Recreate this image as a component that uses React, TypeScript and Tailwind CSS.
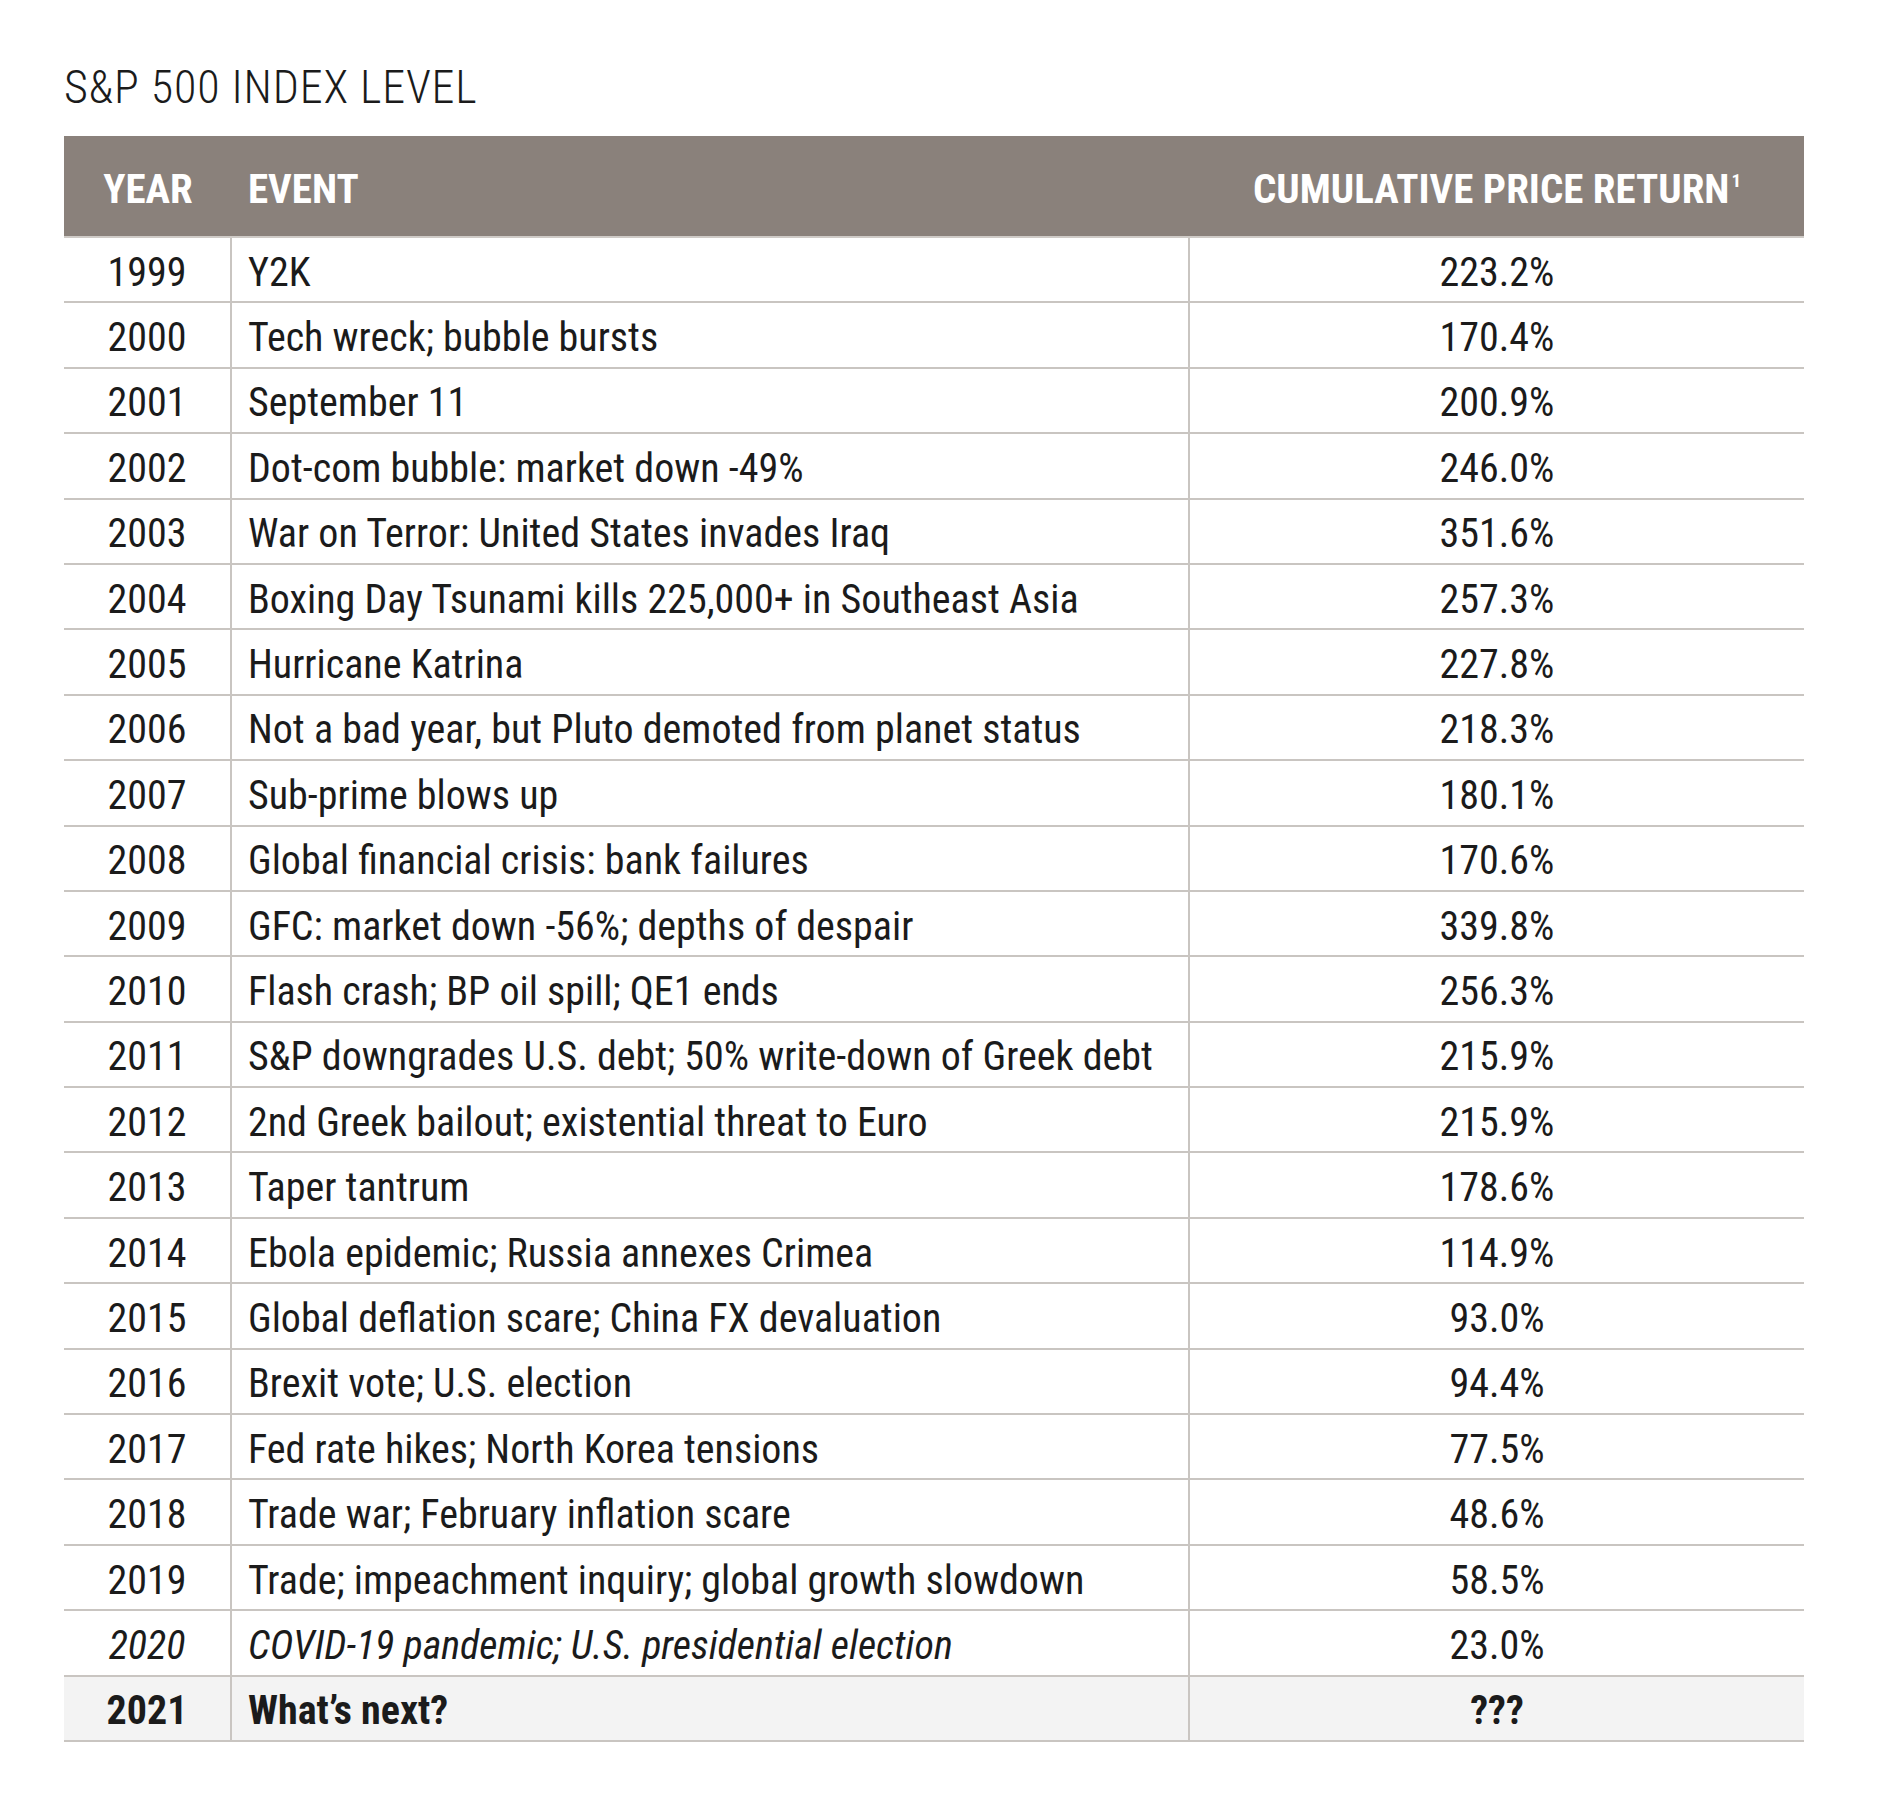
type Row = { year: string; event: string; ret: string; style?: "italic" | "bold" };

const rows: Row[] = [
  { year: "1999", event: "Y2K", ret: "223.2%" },
  { year: "2000", event: "Tech wreck; bubble bursts", ret: "170.4%" },
  { year: "2001", event: "September 11", ret: "200.9%" },
  { year: "2002", event: "Dot-com bubble: market down -49%", ret: "246.0%" },
  { year: "2003", event: "War on Terror: United States invades Iraq", ret: "351.6%" },
  { year: "2004", event: "Boxing Day Tsunami kills 225,000+ in Southeast Asia", ret: "257.3%" },
  { year: "2005", event: "Hurricane Katrina", ret: "227.8%" },
  { year: "2006", event: "Not a bad year, but Pluto demoted from planet status", ret: "218.3%" },
  { year: "2007", event: "Sub-prime blows up", ret: "180.1%" },
  { year: "2008", event: "Global financial crisis: bank failures", ret: "170.6%" },
  { year: "2009", event: "GFC: market down -56%; depths of despair", ret: "339.8%" },
  { year: "2010", event: "Flash crash; BP oil spill; QE1 ends", ret: "256.3%" },
  { year: "2011", event: "S&P downgrades U.S. debt; 50% write-down of Greek debt", ret: "215.9%" },
  { year: "2012", event: "2nd Greek bailout; existential threat to Euro", ret: "215.9%" },
  { year: "2013", event: "Taper tantrum", ret: "178.6%" },
  { year: "2014", event: "Ebola epidemic; Russia annexes Crimea", ret: "114.9%" },
  { year: "2015", event: "Global deflation scare; China FX devaluation", ret: "93.0%" },
  { year: "2016", event: "Brexit vote; U.S. election", ret: "94.4%" },
  { year: "2017", event: "Fed rate hikes; North Korea tensions", ret: "77.5%" },
  { year: "2018", event: "Trade war; February inflation scare", ret: "48.6%" },
  { year: "2019", event: "Trade; impeachment inquiry; global growth slowdown", ret: "58.5%" },
  { year: "2020", event: "COVID-19 pandemic; U.S. presidential election", ret: "23.0%", style: "italic" },
  { year: "2021", event: "What’s next?", ret: "???", style: "bold" },
];

export default function App() {
  return (
    <div
      className="min-h-[1816px] w-full bg-white pt-[64px] pl-[64px] text-[#1b1b1b]"
      style={{ fontFamily: "Roboto, 'Open Sans', sans-serif", fontStretch: "75%" }}
    >
      <h1 className="mb-[26px] text-[46px] font-light leading-[46px] tracking-[0.8px]">S&amp;P 500 INDEX LEVEL</h1>

      <div className="w-[1740px]">
        {/* header */}
        <div className="grid h-[102px] grid-cols-[168px_958px_614px] items-center border-b-2 border-[#cfcbc7] bg-[#8a817b] pt-[8px] text-[41px] font-bold text-white">
          <div className="text-center">YEAR</div>
          <div className="pl-[16px]">EVENT</div>
          <div className="text-center">
            CUMULATIVE PRICE RETURN<span className="ml-[2px] align-[16px] text-[19px]">1</span>
          </div>
        </div>

        {rows.map((r) => {
          const italic = r.style === "italic" ? "italic" : "";
          return (
            <div
              key={r.year}
              className={`grid h-[65.4px] grid-cols-[168px_958px_614px] border-b-2 border-[#c9c5c1] text-[40px] leading-none ${
                r.style === "bold" ? "bg-[#f3f3f3] font-bold" : ""
              }`}
            >
              <div className={`flex items-center justify-center border-r-2 border-[#c9c5c1] pt-[6px] ${italic}`}>{r.year}</div>
              <div className={`flex items-center border-r-2 border-[#c9c5c1] pl-[16px] pt-[6px] ${italic}`}>{r.event}</div>
              <div className="flex items-center justify-center pt-[6px]">{r.ret}</div>
            </div>
          );
        })}
      </div>
    </div>
  );
}
